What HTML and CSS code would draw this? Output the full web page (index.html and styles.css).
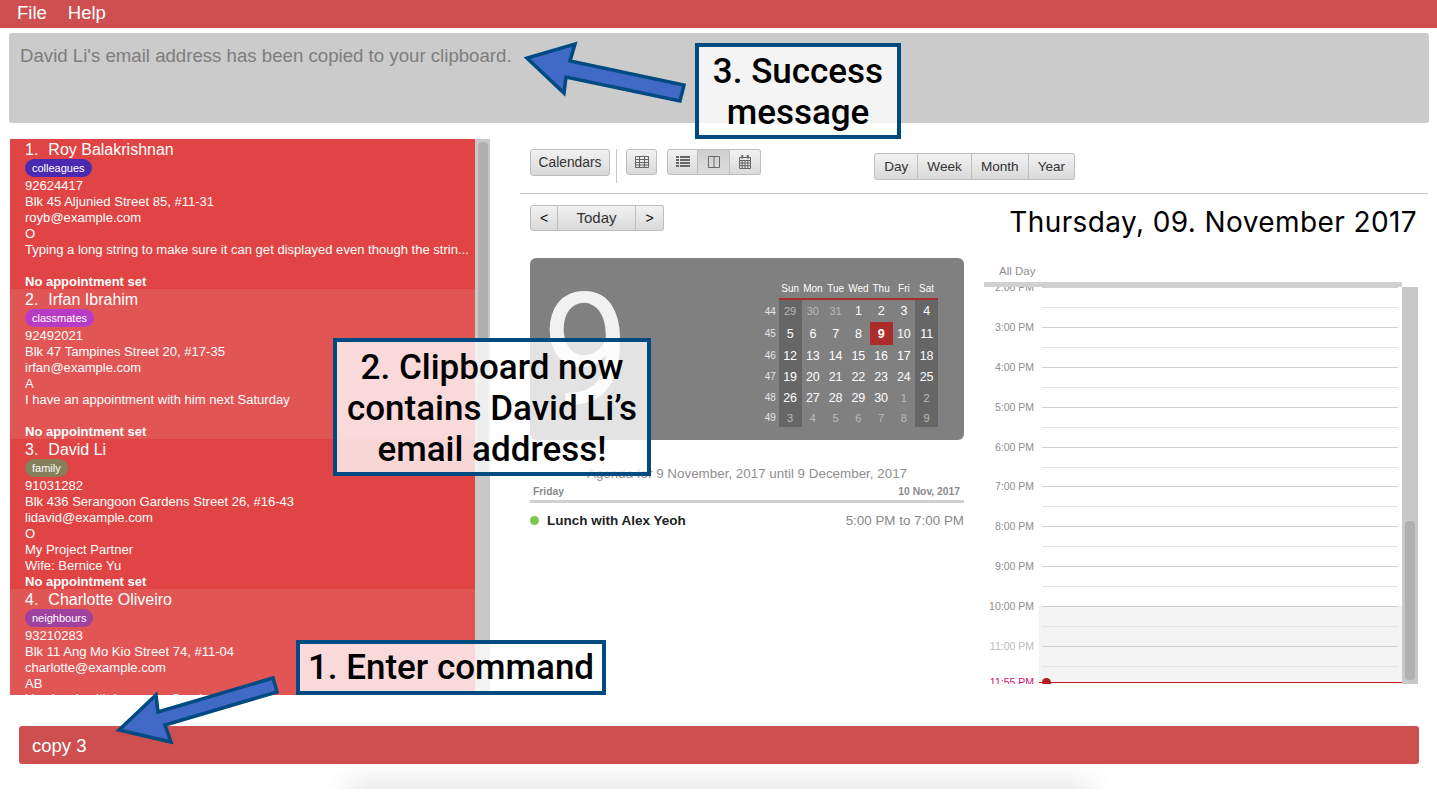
FILE: index.html
```html
<!DOCTYPE html>
<html lang="en">
<head>
<meta charset="utf-8">
<title>Address book</title>
<link rel="stylesheet" href="styles.css">
</head>
<body>
<header class="menubar"><span>File</span><span>Help</span></header>
<section class="result">David Li's email address has been copied to your clipboard.</section>
<main class="main">
  <div class="list">
    <div class="cards">
      <article class="card">
        <div class="name"><span>1.</span><span>Roy Balakrishnan</span></div>
        <div class="tags"><span class="tag tag-colleagues">colleagues</span></div>
        <div class="line">92624417</div>
        <div class="line">Blk 45 Aljunied Street 85, #11-31</div>
        <div class="line">royb@example.com</div>
        <div class="line">O</div>
        <div class="line">Typing a long string to make sure it can get displayed even though the strin...</div>
        <div class="line">&nbsp;</div>
        <div class="line appt">No appointment set</div>
      </article>
      <article class="card alt">
        <div class="name"><span>2.</span><span>Irfan Ibrahim</span></div>
        <div class="tags"><span class="tag tag-classmates">classmates</span></div>
        <div class="line">92492021</div>
        <div class="line">Blk 47 Tampines Street 20, #17-35</div>
        <div class="line">irfan@example.com</div>
        <div class="line">A</div>
        <div class="line">I have an appointment with him next Saturday</div>
        <div class="line">&nbsp;</div>
        <div class="line appt">No appointment set</div>
      </article>
      <article class="card">
        <div class="name"><span>3.</span><span>David Li</span></div>
        <div class="tags"><span class="tag tag-family">family</span></div>
        <div class="line">91031282</div>
        <div class="line">Blk 436 Serangoon Gardens Street 26, #16-43</div>
        <div class="line">lidavid@example.com</div>
        <div class="line">O</div>
        <div class="line">My Project Partner</div>
        <div class="line">Wife: Bernice Yu</div>
        <div class="line appt">No appointment set</div>
      </article>
      <article class="card alt">
        <div class="name"><span>4.</span><span>Charlotte Oliveiro</span></div>
        <div class="tags"><span class="tag tag-neighbours">neighbours</span></div>
        <div class="line">93210283</div>
        <div class="line">Blk 11 Ang Mo Kio Street 74, #11-04</div>
        <div class="line">charlotte@example.com</div>
        <div class="line">AB</div>
        <div class="line line-cut">Has lunch with her every Sunday</div>
      </article>
    </div>
    <div class="list-track"><div class="list-thumb"></div></div>
  </div>

  <div class="calendar">
    <div class="toolbar">
      <button class="btn btn-cal">Calendars</button>
      <div class="tool-sep"></div>
      <button class="btn btn-icon">
        <svg class="ico" viewBox="0 0 14 14"><path d="M.5 1.500h13v11H.5zM.5 4.500h13M.5 7.500h13M.5 10h13M4.500 1.500v11M9.500 1.500v11"/></svg>
      </button>
      <div class="group group-views">
        <button class="btn btn-icon">
          <svg class="ico ico-bars" viewBox="0 0 14 14"><path d="M0 2h3M4 2h10M0 5h3M4 5h10M0 8h3M4 8h10M0 11h3M4 11h10"/></svg>
        </button>
        <button class="btn btn-icon on">
          <svg class="ico" viewBox="0 0 14 14"><path d="M1.500 1.500h11v11h-11zM7 1.500v11"/></svg>
        </button>
        <button class="btn btn-icon">
          <svg class="ico" viewBox="0 0 14 14"><path d="M1.500 2.500h11v11h-11zM1.500 5.500h11M1.500 8h11M1.500 10.700h11M4.200 5.500v8M7 5.500v8M9.800 5.500v8"/><path class="pegs" d="M4.200 0v3.500M9.800 0v3.500"/></svg>
        </button>
      </div>
      <div class="group group-range">
        <button class="btn">Day</button>
        <button class="btn">Week</button>
        <button class="btn">Month</button>
        <button class="btn">Year</button>
      </div>
    </div>

    <div class="navrow">
      <div class="group group-nav">
        <button class="btn nav-step">&lt;</button>
        <button class="btn nav-today">Today</button>
        <button class="btn nav-step">&gt;</button>
      </div>
      <h1 class="date">Thursday, 09. November 2017</h1>
    </div>

    <div class="panes">
      <div class="pane-left">
        <div class="month">
          <div class="bigday">9</div>
          <div class="mini">
            <span></span><b class="dow">Sun</b><b class="dow">Mon</b><b class="dow">Tue</b><b class="dow">Wed</b><b class="dow">Thu</b><b class="dow">Fri</b><b class="dow">Sat</b>
            <i class="wk">44</i><span class="we dim">29</span><span class="dim">30</span><span class="dim">31</span><span>1</span><span>2</span><span>3</span><span class="we">4</span>
            <i class="wk">45</i><span class="we">5</span><span>6</span><span>7</span><span>8</span><span class="today">9</span><span>10</span><span class="we">11</span>
            <i class="wk">46</i><span class="we">12</span><span>13</span><span>14</span><span>15</span><span>16</span><span>17</span><span class="we">18</span>
            <i class="wk">47</i><span class="we">19</span><span>20</span><span>21</span><span>22</span><span>23</span><span>24</span><span class="we">25</span>
            <i class="wk">48</i><span class="we">26</span><span>27</span><span>28</span><span>29</span><span>30</span><span class="dim">1</span><span class="we dim">2</span>
            <i class="wk">49</i><span class="we dim">3</span><span class="dim">4</span><span class="dim">5</span><span class="dim">6</span><span class="dim">7</span><span class="dim">8</span><span class="we dim">9</span>
          </div>
        </div>
        <div class="agenda-title">Agenda for 9 November, 2017 until 9 December, 2017</div>
        <div class="agenda-head"><span>Friday</span><span>10 Nov, 2017</span></div>
        <div class="event">
          <span class="dot"></span>
          <span class="event-name">Lunch with Alex Yeoh</span>
          <span class="event-time">5:00 PM to 7:00 PM</span>
        </div>
      </div>

      <div class="pane-right">
        <div class="allday">All Day</div>
        <div class="allday-bar"></div>
        <div class="dayview">
          <div class="hours">
            <div class="hour"><span class="time">2:00 PM</span><div class="slots"><div></div><div></div></div></div>
            <div class="hour"><span class="time">3:00 PM</span><div class="slots"><div></div><div></div></div></div>
            <div class="hour"><span class="time">4:00 PM</span><div class="slots"><div></div><div></div></div></div>
            <div class="hour"><span class="time">5:00 PM</span><div class="slots"><div></div><div></div></div></div>
            <div class="hour"><span class="time">6:00 PM</span><div class="slots"><div></div><div></div></div></div>
            <div class="hour"><span class="time">7:00 PM</span><div class="slots"><div></div><div></div></div></div>
            <div class="hour"><span class="time">8:00 PM</span><div class="slots"><div></div><div></div></div></div>
            <div class="hour"><span class="time">9:00 PM</span><div class="slots"><div></div><div></div></div></div>
            <div class="hour past"><span class="time">10:00 PM</span><div class="slots"><div></div><div></div></div></div>
            <div class="hour past late"><span class="time">11:00 PM</span><div class="slots"><div></div><div></div></div></div>
            <div class="now"><span class="now-time">11:55 PM</span><span class="now-dot"></span></div>
          </div>
          <div class="day-track"><div class="day-thumb"></div></div>
        </div>
      </div>
    </div>
  </div>
</main>
<section class="command">copy 3</section>
<div class="shadow"></div>

<svg class="arrows" viewBox="0 0 1437 804">
  <polygon class="arrow" points="684,85 680,101 566,77 564,93 527,58 575,44 570,61"/>
  <polygon class="arrow" points="273,678 277,692 165,725 171,742 119,730 156,695 158,712"/>
</svg>
<div class="callout c3">3. Success message</div>
<div class="callout c2">2. Clipboard now contains David Li’s email address!</div>
<div class="callout c1">1. Enter command</div>
</body>
</html>
```

FILE: styles.css
```css
* { box-sizing: border-box; }
html, body { margin: 0; padding: 0; }
body {
  position: relative;
  width: 1437px;
  height: 804px;
  overflow: hidden;
  background: #fff;
  font-family: "Liberation Sans", Arial, sans-serif;
}

/* top bars */
.menubar {
  height: 28px;
  background: #cd4f4f;
  color: #fff;
  font-size: 18.500px;
  line-height: 26px;
  padding-left: 17px;
  display: flex;
  gap: 21px;
}
.result {
  height: 90px;
  margin: 5px 8px 0 9px;
  padding: 12px 11px;
  background: #cbcbcb;
  border-radius: 3px;
  color: #7d7d7d;
  font-size: 18.650px;
  line-height: 22px;
}

/* main */
.main {
  display: flex;
  height: 556px;
  margin-top: 16px;
  padding-left: 10px;
}
.list { width: 480px; display: flex; overflow: hidden; }
.cards { width: 465px; }
.card {
  height: 150px;
  padding-left: 15px;
  background: #e04444;
  color: #fff;
  overflow: hidden;
}
.card.alt { background: #e15555; }
.name { display: flex; gap: 10px; height: 20px; font-size: 16px; line-height: 22px; }
.tags { height: 18px; display: flex; }
.tag {
  height: 18px;
  padding: 0 7px;
  border-radius: 9px;
  font-size: 11px;
  line-height: 18px;
  color: #fff;
}
.tag-colleagues { background: #4a2ab0; }
.tag-classmates { background: #b83bc6; }
.tag-family { background: #84805a; }
.tag-neighbours { background: #a0409f; }
.line {
  height: 16px;
  font-size: 13.050px;
  line-height: 18px;
  white-space: nowrap;
  overflow: hidden;
}
.line-cut { line-height: 16px; }
.appt { font-weight: 700; font-size: 13px; }
.list-track { width: 15px; background: #c8c8c8; padding: 3px 2px 0 3px; }
.list-thumb { height: 330px; background: #b0b0b0; border-radius: 4px; }

/* calendar */
.calendar { width: 908px; margin-left: 30px; }
.toolbar {
  height: 55px;
  padding: 10px 0 0 10px;
  border-bottom: 1px solid #c4c4c4;
  display: flex;
  align-items: flex-start;
}
.btn {
  height: 26px;
  padding: 0 8px;
  border: 1px solid #bdbdbd;
  border-radius: 3px;
  background: linear-gradient(#f2f2f2, #d9d9d9);
  color: #333;
  font-family: "Liberation Sans", Arial, sans-serif;
  font-size: 13.800px;
  display: flex;
  align-items: center;
  justify-content: center;
}
.btn-cal { width: 80px; height: 27px; }
.tool-sep { width: 1px; height: 34px; background: #c8c8c8; margin: 0 9px 0 6px; }
.btn-icon { width: 31px; padding: 0; }
.group-views .btn-icon { width: 31.400px; }
.ico { width: 14px; height: 14px; fill: none; stroke: #666; stroke-width: 1; }
.ico-bars { stroke-width: 1.800px; }
.pegs { stroke-width: 2; }
.group { display: flex; }
.group .btn { border-radius: 0; border-left-width: 0; }
.group .btn:first-child { border-radius: 3px 0 0 3px; border-left-width: 1px; }
.group .btn:last-child { border-radius: 0 3px 3px 0; }
.group-views { margin-left: 10px; }
.group .on { background: linear-gradient(#cfcfcf, #dcdcdc); }
.group-range { margin: 4px 0 0 113px; }
.group-range .btn { height: 27px; padding: 0 9px; font-size: 13.600px; }
.navrow {
  height: 64px;
  padding: 11px 11px 0 10px;
  display: flex;
  justify-content: space-between;
  align-items: flex-start;
}
.nav-step { width: 28px; padding: 0; color: #111; font-size: 14px; }
.nav-today { width: 78px; padding-bottom: 2px; font-size: 15px; }
.date {
  margin: 1px 0 0;
  font-family: Inter, sans-serif;
  font-size: 28px;
  font-weight: 400;
  line-height: 33px;
  letter-spacing: 0.400px;
  color: #000;
}
.panes { display: flex; padding-left: 10px; gap: 20px; }
.pane-left { width: 434px; }
.pane-right { width: 434px; }

/* month panel */
.month {
  height: 182px;
  background: #808080;
  border-radius: 6px;
  padding: 21px 26px 0 12px;
  display: flex;
  justify-content: space-between;
  overflow: hidden;
}
.bigday {
  margin-top: 7px;
  font-family: Roboto, sans-serif;
  font-size: 157px;
  font-weight: 400;
  line-height: 130px;
  color: #f1f1f1;
}
.mini {
  display: grid;
  grid-template-columns: repeat(8, 22.750px);
  grid-template-rows: 21px 22px 23px 21px 21px 21px 19px;
  color: #fff;
  font-size: 12.500px;
  text-align: center;
}
.mini span, .mini i, .mini b { display: flex; align-items: center; justify-content: center; }
.dow { font-size: 10px; font-weight: 400; border-bottom: 2px solid #a92c2c; }
.mini > span:first-child { border: 0; }
.mini .wk { justify-content: flex-end; padding-right: 3px; font-size: 10px; font-style: normal; color: #e4e4e4; }
.mini .we { background: #666; }
.mini .dim { color: #bbb; font-size: 11px; }
.mini .today { background: #ac2b2b; font-weight: 700; }

/* agenda */
.agenda-title {
  margin-top: 26px;
  height: 17px;
  text-align: center;
  color: #8f8f8f;
  font-size: 13.400px;
  line-height: 16px;
}
.agenda-head {
  height: 20px;
  padding: 0 4px 0 3px;
  display: flex;
  justify-content: space-between;
  border-bottom: 3px solid #cfcfcf;
  color: #8a8a8a;
  font-size: 10.300px;
  font-weight: 700;
  line-height: 17px;
}
.event {
  height: 34px;
  display: flex;
  align-items: center;
  font-size: 13px;
}
.dot { width: 9px; height: 9px; border-radius: 50%; background: #7bc850; margin-right: 8px; }
.event-name { font-weight: 700; color: #222; font-size: 13.500px; }
.event-time { margin-left: auto; color: #8a8a8a; font-size: 13.400px; }

/* day view */
.allday {
  height: 18px;
  margin-top: 6px;
  padding: 0 0 0 15px;
  color: #8f8f8f;
  font-size: 11.500px;
  line-height: 14px;
}
.allday-bar { height: 5px; width: 418px; background: #d0d0d0; }
.dayview { display: flex; height: 397px; }
.hours { position: relative; width: 418px; overflow: hidden; }
.hour { display: flex; height: 39.900px; }
.time {
  width: 50px;
  flex: none;
  height: 14px;
  text-align: right;
  font-size: 10.500px;
  line-height: 14px;
  color: #8e8e8e;
  transform: translateY(-50%);
}
.late .time { color: #bbb; }
.slots { flex: 1; margin-left: 5px; padding: 0 4px 0 3px; }
.past .slots { background: #f3f3f3; }
.slots div { height: 50%; border-top: 1px solid #cfcfcf; }
.slots div + div { border-top-color: #e4e4e4; }
.now {
  position: absolute;
  left: 0;
  right: 0;
  top: 395px;
  height: 1px;
  margin-left: 55px;
  background: #c02020;
}
.now-time {
  position: absolute;
  right: 368px;
  top: -7px;
  height: 14px;
  white-space: nowrap;
  font-size: 10.500px;
  line-height: 14px;
  color: #d0106a;
}
.now-dot {
  position: absolute;
  left: 3px;
  top: -4px;
  width: 9px;
  height: 9px;
  border-radius: 50%;
  background: #b02020;
}
.day-track { width: 16px; background: #c8c8c8; padding: 234px 3px 4px; }
.day-thumb { height: 100%; background: #b0b0b0; border-radius: 4px; }

/* command box */
.command {
  height: 38px;
  margin: 31px 18px 0 19px;
  padding-left: 13px;
  background: #cd4f4f;
  border-radius: 3px;
  color: #fff;
  font-size: 18.500px;
  line-height: 40px;
}
.shadow {
  height: 25px;
  margin: 0 326px 0 327px;
  background: linear-gradient(#fff, #eee);
  -webkit-mask-image: linear-gradient(to right, transparent, #000 42px, #000 calc(100% - 42px), transparent);
  mask-image: linear-gradient(to right, transparent, #000 42px, #000 calc(100% - 42px), transparent);
}

/* annotations */
.arrows { position: absolute; left: 0; top: 0; width: 1437px; height: 804px; }
.arrow { fill: #4169c6; stroke: #004a82; stroke-width: 3.500; }
.callout {
  position: absolute;
  display: flex;
  align-items: center;
  justify-content: center;
  text-align: center;
  border: 4px solid #004a82;
  background: rgba(255, 255, 255, 0.78);
  color: #000;
  font-family: Roboto, sans-serif;
  font-size: 35px;
  font-weight: 500;
  line-height: 41px;
}
.c3 { left: 695px; top: 43px; width: 206px; height: 96px; padding-top: 1px; }
.c2 { left: 333px; top: 338px; width: 318px; height: 138px; padding: 2px 4px 0; }
.c1 { left: 296px; top: 640px; width: 310px; height: 55px; }
```
